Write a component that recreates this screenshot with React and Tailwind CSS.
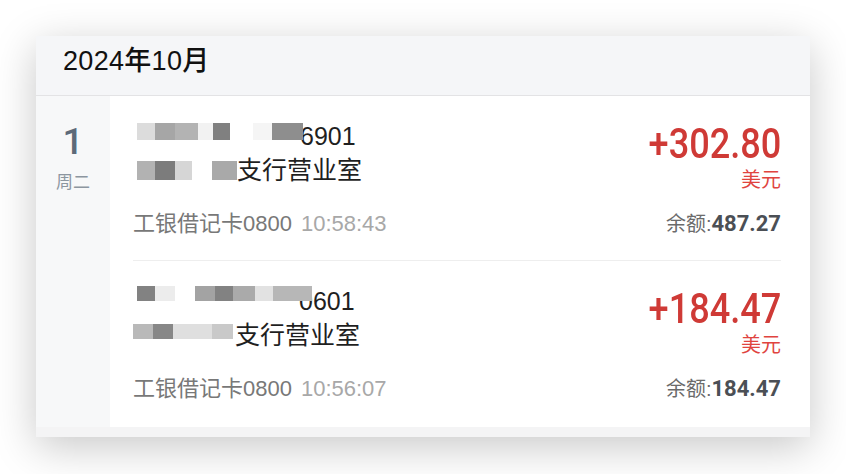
const sans = "font-['Liberation_Sans','Noto_Sans_CJK_SC',sans-serif]";
const din = "font-['Roboto','Liberation_Sans','Noto_Sans_CJK_SC',sans-serif]";

// redaction blocks: [width, colour class]
const rows = [
  {
    line1: {
      offset: 'ml-[4px] mt-[4px]',
      blocks: [
        [18, 'bg-[#dcdcdc]'], [20, 'bg-[#a6a6a6]'], [23, 'bg-[#b3b3b3]'], [15, 'bg-[#f2f2f2]'],
        [17, 'bg-[#808080]'], [23, 'bg-transparent'], [19, 'bg-[#f5f5f5]'], [31, 'bg-[#8e8e8e]'],
      ],
      h: 'h-[17px]',
      text: '6901',
      textShift: '-ml-[3px]',
    },
    line2: {
      offset: 'ml-[4px] mt-[8px]',
      blocks: [[18, 'bg-[#b2b2b2]'], [20, 'bg-[#7c7c7c]'], [17, 'bg-[#d6d6d6]'], [20, 'bg-transparent'], [25, 'bg-[#a9a9a9]']],
      h: 'h-[19px]',
      text: '支行营业室',
      textShift: 'ml-0',
    },
    card: '工银借记卡0800',
    time: '10:58:43',
    amount: '+302.80',
    balance: '487.27',
    border: true,
  },
  {
    line1: {
      offset: 'ml-[4px] mt-[2px]',
      blocks: [
        [18, 'bg-[#828282]'], [20, 'bg-[#ececec]'], [20, 'bg-transparent'], [20, 'bg-[#a3a3a3]'],
        [18, 'bg-[#828282]'], [22, 'bg-[#aaaaaa]'], [18, 'bg-[#e2e2e2]'], [39, 'bg-[#b7b7b7]'],
      ],
      h: 'h-[15px]',
      text: '0601',
      textShift: '-ml-[13px]',
    },
    line2: {
      offset: 'ml-0 mt-[6px]',
      blocks: [[20, 'bg-[#b9b9b9]'], [20, 'bg-[#878787]'], [39, 'bg-[#dfdfdf]'], [21, 'bg-[#c9c9c9]']],
      h: 'h-[15px]',
      text: '支行营业室',
      textShift: 'ml-[2px]',
    },
    card: '工银借记卡0800',
    time: '10:56:07',
    amount: '+184.47',
    balance: '184.47',
    border: false,
  },
];

function MaskedLine({ line }) {
  return (
    <div className="flex h-[34px] items-center">
      <div className={`relative z-10 flex self-start blur-[0.6px] ${line.offset}`}>
        {line.blocks.map(([w, c], i) => (
          <span key={i} className={`${line.h} ${c}`} style={{ width: w }} />
        ))}
      </div>
      <span className={`${line.textShift} text-[25px] leading-[34px] text-[#1f1f1f]`}>{line.text}</span>
    </div>
  );
}

function Row({ row }) {
  return (
    <div className={`pt-[23px] pb-[22px] ${row.border ? 'border-b border-[#eeeeee]' : ''}`}>
      <div className="flex h-[73px] items-start justify-between">
        <div>
          <MaskedLine line={row.line1} />
          <MaskedLine line={row.line2} />
        </div>
        <div className="flex flex-col items-end">
          <div className={`${din} mt-[5px] origin-right scale-x-[0.86] text-[42px] leading-[40px] font-medium text-[#cf3a36]`}>
            {row.amount}
          </div>
          <div className="mt-[4px] text-[20px] leading-[24px] text-[#e0443f]">美元</div>
        </div>
      </div>
      <div className="mt-[18px] flex h-[28px] items-center justify-between">
        <div className="text-[22px] leading-[28px]">
          <span className="text-[#787878]">{row.card}</span>
          <span className="ml-[9px] text-[#a8a8a8]">{row.time}</span>
        </div>
        <div className="text-[20px] leading-[28px]">
          <span className="text-[#6b6b6b]">余额:</span>
          <span className={`${din} text-[22px] font-bold text-[#4b4f55]`}>{row.balance}</span>
        </div>
      </div>
    </div>
  );
}

export default function App() {
  return (
    <div className={`${sans} min-h-[474px] w-[846px] bg-white pt-[36px] pl-[36px]`}>
      <div className="w-[774px] overflow-hidden bg-[#f4f4f5] pb-[10px] shadow-[0_10px_40px_rgba(0,0,0,0.22)]">
        <div className="flex h-[60px] items-center border-b border-[#e3e3e5] bg-[#f5f6f8] pb-[10px] pl-[27px]">
          <span className="text-[27px] leading-[34px] font-medium tracking-[0.3px] text-[#111111]">2024年10月</span>
        </div>
        <div className="flex">
          <div className="w-[74px] bg-[#f7f8f9]">
            <div className="flex h-[164px] flex-col items-center pt-[28px]">
              <span className={`${din} text-[37px] leading-[36px] font-medium text-[#5d6a79]`}>1</span>
              <span className="mt-[12px] text-[17px] leading-[22px] text-[#8c96a0]">周二</span>
            </div>
          </div>
          <div className="flex-1 bg-white pr-[29px] pl-[23px] pb-[2px]">
            {rows.map((r, i) => (
              <Row key={i} row={r} />
            ))}
          </div>
        </div>
      </div>
    </div>
  );
}
